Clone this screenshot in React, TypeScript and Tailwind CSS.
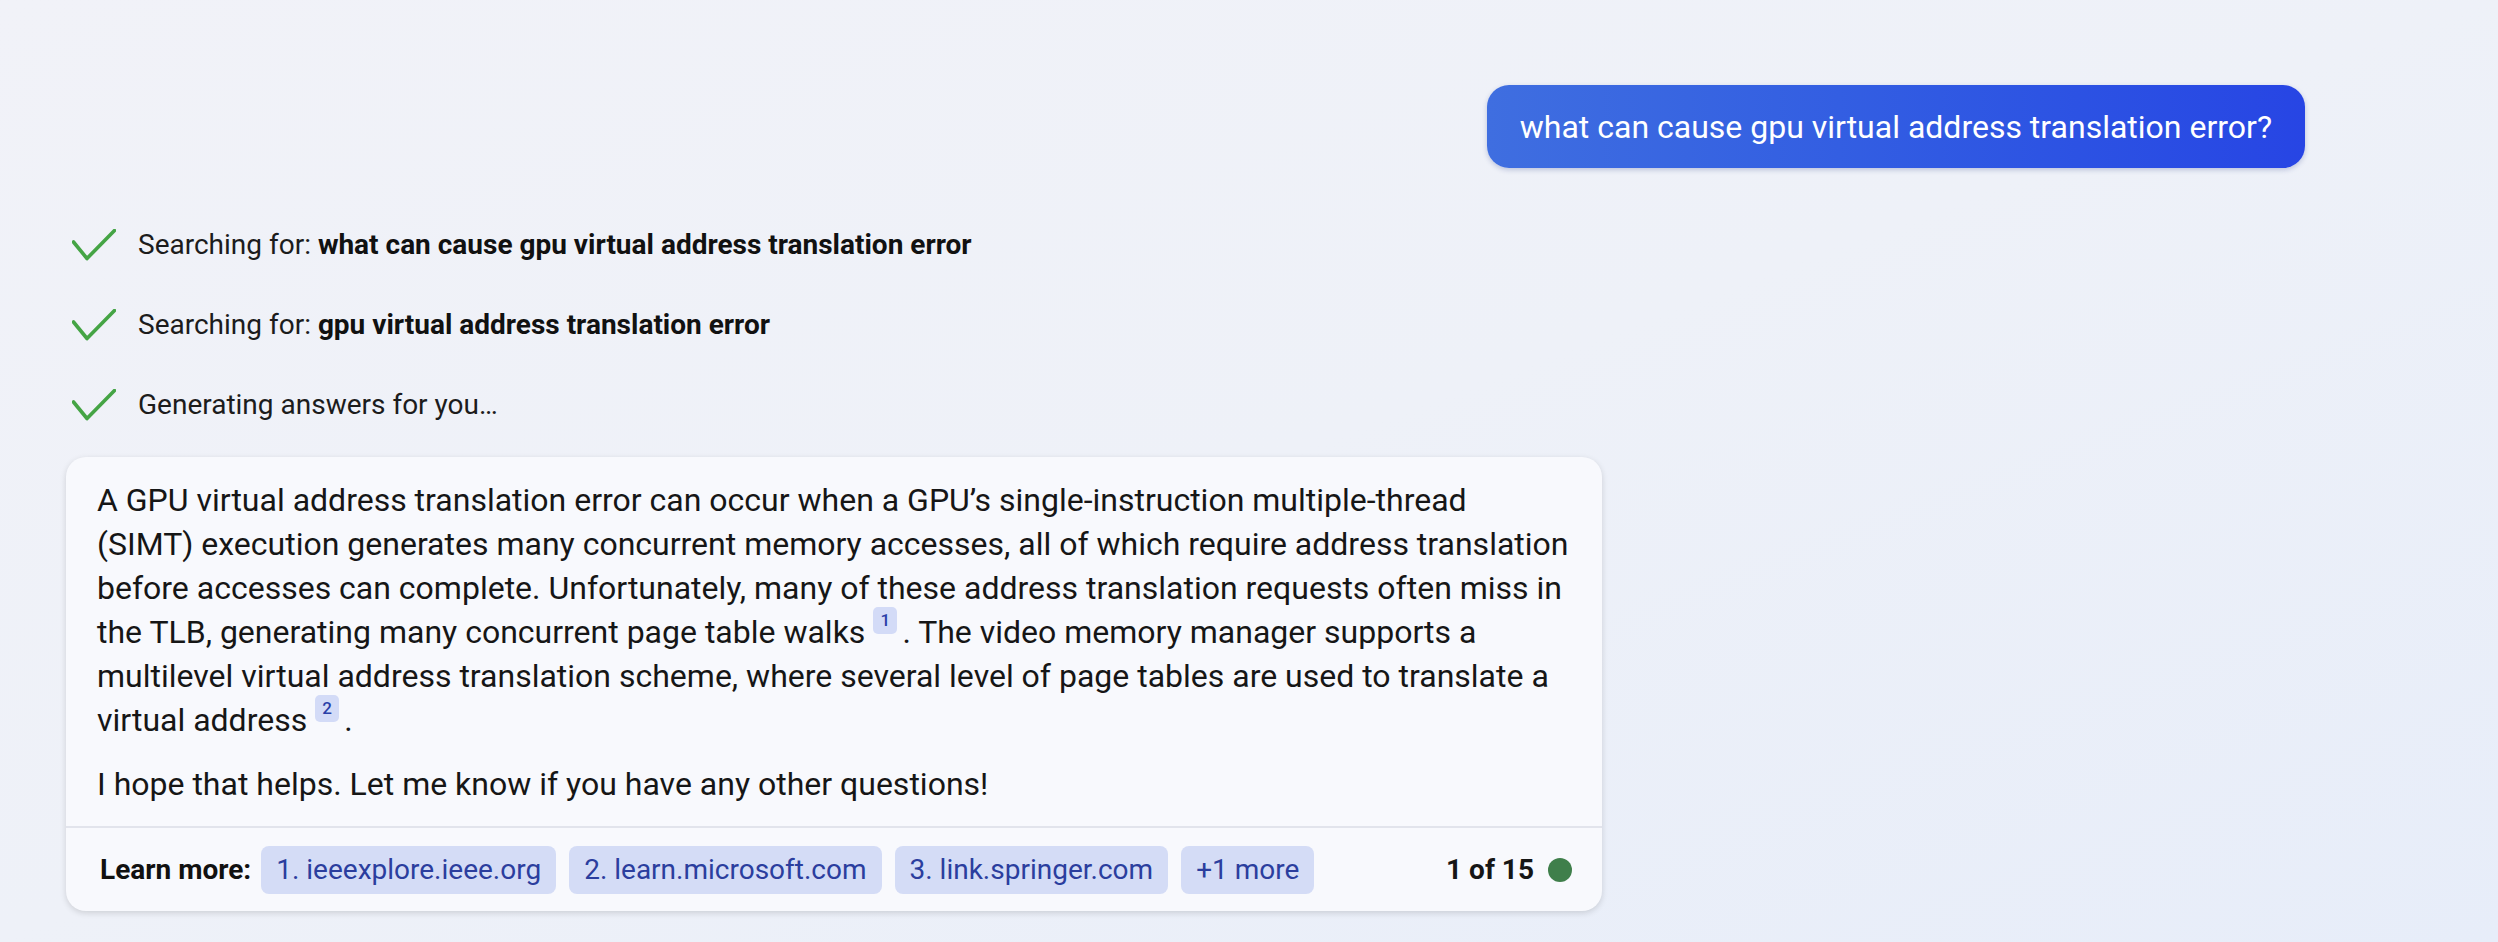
// @ts-nocheck
import React from "react";

const steps = [
  { label: "Searching for: ", bold: "what can cause gpu virtual address translation error" },
  { label: "Searching for: ", bold: "gpu virtual address translation error" },
  { label: "Generating answers for you…", bold: "" },
];

const sources = [
  "1. ieeexplore.ieee.org",
  "2. learn.microsoft.com",
  "3. link.springer.com",
  "+1 more",
];

function Check() {
  return (
    <svg width="44" height="32" viewBox="0 0 44 32" fill="none" className="shrink-0">
      <polyline
        points="1.5,13 15,29.5 42.5,1.5"
        stroke="#45a445"
        strokeWidth="3.6"
        strokeLinecap="round"
        strokeLinejoin="round"
      />
    </svg>
  );
}

function Cite({ n }: { n: number }) {
  return (
    <span className="relative top-[-3px] ml-[8px] mr-[5px] inline-block h-[27px] w-[24px] rounded-[5px] bg-[#d3dbf7] text-center align-top text-[17px] font-medium leading-[27px] text-[#2a3fa8]">
      {n}
    </span>
  );
}

export default function App() {
  return (
    <div
      className="h-[942px] w-full overflow-hidden bg-gradient-to-br from-[#f1f2f8] via-[#eef1f8] to-[#e7edf9] text-[28px] text-[#161616]"
      style={{ fontFamily: "Roboto, 'Noto Sans', sans-serif" }}
    >
      {/* user message */}
      <div className="flex justify-end pr-[193px] pt-[85px]">
        <div className="flex h-[83px] items-center rounded-[22px] bg-gradient-to-r from-[#3f6ee0] to-[#2745e4] px-[33px] text-[32px] text-white shadow-[0_2px_5px_rgba(40,60,140,0.25)]">
          what can cause gpu virtual address translation error?
        </div>
      </div>

      {/* progress steps */}
      <div className="mt-[52px] flex flex-col gap-[30px] pl-[72px]">
        {steps.map((s, i) => (
          <div key={i} className="flex h-[50px] items-center gap-[22px]">
            <Check />
            <span className="whitespace-nowrap text-[#1c1c1c]">
              {s.label}
              {s.bold && <b className="font-bold text-[#111]">{s.bold}</b>}
            </span>
          </div>
        ))}
      </div>

      {/* answer card */}
      <div className="ml-[66px] mt-[27px] w-[1536px] rounded-[20px] bg-[#f8f9fd] shadow-[0_2px_6px_rgba(0,0,0,0.14)]">
        <div className="px-[31px] pb-[20px] pt-[21px] text-[32px] leading-[44px] text-[#161616]">
          <p className="whitespace-nowrap">
            A GPU virtual address translation error can occur when a GPU’s single-instruction multiple-thread
            <br />
            (SIMT) execution generates many concurrent memory accesses, all of which require address translation
            <br />
            before accesses can complete. Unfortunately, many of these address translation requests often miss in
            <br />
            the TLB, generating many concurrent page table walks<Cite n={1} />. The video memory manager supports a
            <br />
            multilevel virtual address translation scheme, where several level of page tables are used to translate a
            <br />
            virtual address<Cite n={2} />.
          </p>
          <p className="mt-[20px]">I hope that helps. Let me know if you have any other questions!</p>
        </div>

        <div className="flex items-center border-t-2 border-[#e2e4ec] pb-[17px] pl-[34px] pr-[30px] pt-[18px]">
          <span className="mr-[10px] whitespace-nowrap font-bold text-[#111]">Learn more:</span>
          <div className="flex gap-[13px]">
            {sources.map((s) => (
              <span
                key={s}
                className="flex h-[48px] items-center whitespace-nowrap rounded-[8px] bg-[#d4dcf6] px-[15px] text-[#2b3e9e]"
              >
                {s}
              </span>
            ))}
          </div>
          <div className="ml-auto flex items-center gap-[14px]">
            <span className="font-bold text-[#161616]">1 of 15</span>
            <span className="h-[24px] w-[24px] rounded-full bg-[#3f7f4b]" />
          </div>
        </div>
      </div>
    </div>
  );
}
